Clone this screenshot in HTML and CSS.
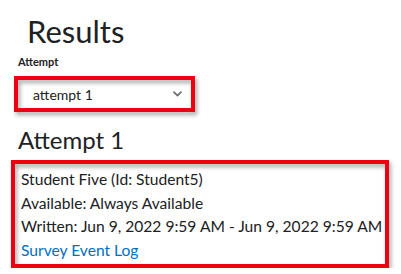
FILE: index.html
```html
<!DOCTYPE html>
<html lang="en">
<head>
  <meta charset="utf-8">
  <title>Results</title>
  <link rel="stylesheet" href="styles.css">
</head>
<body>
  <main class="page">
    <h1 class="title">Results</h1>
    <label class="field-label" for="attempt">Attempt</label>
    <div class="mark mark-select">
      <div class="select" id="attempt">
        <span>attempt 1</span>
        <svg class="chevron" width="9" height="6" viewBox="0 0 9 6">
          <path d="M1 1.2 L4.5 4.6 L8 1.2" fill="none" stroke="#6e7376" stroke-width="1.8" stroke-linecap="round" stroke-linejoin="round"/>
        </svg>
      </div>
    </div>
    <h2 class="subtitle">Attempt 1</h2>
    <div class="mark mark-info">
      <p>Student Five (Id: Student5)</p>
      <p>Available: Always Available</p>
      <p>Written: Jun 9, 2022 9:59 AM - Jun 9, 2022 9:59 AM</p>
      <p><a href="#">Survey Event Log</a></p>
    </div>
  </main>
</body>
</html>
```

FILE: styles.css
```css
* {
  margin: 0;
  padding: 0;
  box-sizing: border-box;
}

:root {
  --ink: #202122;
  --red: #ee0011;
  --link: #006fbf;
}

body {
  background: #fff;
  color: var(--ink);
  font-family: Lato, "Open Sans", sans-serif;
}

.page {
  display: flex;
  flex-direction: column;
  align-items: flex-start;
  padding: 12px 0 0 11px;
}

.title {
  font-size: 31px;
  font-weight: 400;
  line-height: 38px;
  margin-left: 16px;
}

.field-label {
  font-size: 11px;
  font-weight: 700;
  line-height: 12px;
  margin: 6px 0 0 7px;
}

/* red annotation frames, drawn over the content */
.mark {
  position: relative;
  padding: 4px;
}

.mark::after {
  content: "";
  position: absolute;
  inset: 0;
  border: 4px solid var(--red);
  filter: drop-shadow(2px 3px 2px rgba(0, 0, 0, .35));
  pointer-events: none;
}

.mark-select {
  margin: 8px 0 0 3px;
  width: 181px;
  height: 36px;
}

.select {
  display: flex;
  align-items: center;
  justify-content: space-between;
  height: 100%;
  padding: 0 9px 0 15px;
  font-size: 14px;
  background: #fff;
}

.subtitle {
  font-size: 24px;
  font-weight: 400;
  line-height: 28px;
  margin: 14px 0 0 7px;
}

.mark-info {
  margin-top: 6px;
  width: 378px;
  height: 108px;
  padding: 8px 0 0 10px;
  font-size: 15.6px;
  line-height: 23.5px;
}

.mark-info a {
  color: var(--link);
  text-decoration: none;
}
```
